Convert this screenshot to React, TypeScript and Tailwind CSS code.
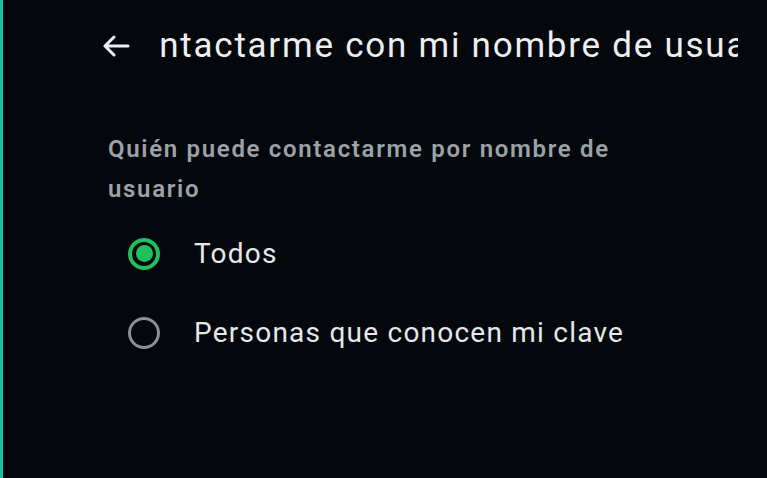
function Radio({ checked }: { checked: boolean }) {
  return checked ? (
    <span className="flex h-[32px] w-[32px] items-center justify-center rounded-full border-[4px] border-[#20c05f]">
      <span className="h-[17px] w-[17px] rounded-full bg-[#20c05f]" />
    </span>
  ) : (
    <span className="h-[32px] w-[32px] rounded-full border-[3px] border-[#8b9195]" />
  );
}

const options = [
  { label: "Todos", checked: true },
  { label: "Personas que conocen mi clave", checked: false },
];

export default function App() {
  return (
    <div
      className="h-[478px] w-full overflow-hidden border-l-[3px] border-[#19c2a5] bg-[#04070b]"
      style={{ fontFamily: "Roboto, 'Noto Sans', sans-serif" }}
    >
      <div className="flex h-[92px] items-center pl-[99px]">
        <svg width="28" height="22" viewBox="0 0 28 22" fill="none" stroke="#eceef0" strokeWidth="3" strokeLinecap="round" strokeLinejoin="round">
          <path d="M26 11H3M12 2L3 11l9 9" />
        </svg>
        <div className="ml-[30px] w-[578px] overflow-hidden whitespace-nowrap">
          <span className="ml-[-47px] text-[35px] leading-none tracking-[0.05em] text-[#eceef0]">
            Contactarme con mi nombre de usuario
          </span>
        </div>
      </div>

      <div className="pl-[105px] pt-[37px]">
        <p className="w-[560px] text-[24px] font-semibold leading-[40px] tracking-[0.07em] text-[#9ba3a8]">
          Quién puede contactarme por nombre de usuario
        </p>
      </div>

      <div className="mt-[5px] flex flex-col pl-[125px]">
        {options.map((o) => (
          <div key={o.label} className="flex h-[79px] items-center gap-[34px]">
            <Radio checked={o.checked} />
            <span className="text-[28px] tracking-[0.044em] text-[#e6e8ea]">{o.label}</span>
          </div>
        ))}
      </div>
    </div>
  );
}
